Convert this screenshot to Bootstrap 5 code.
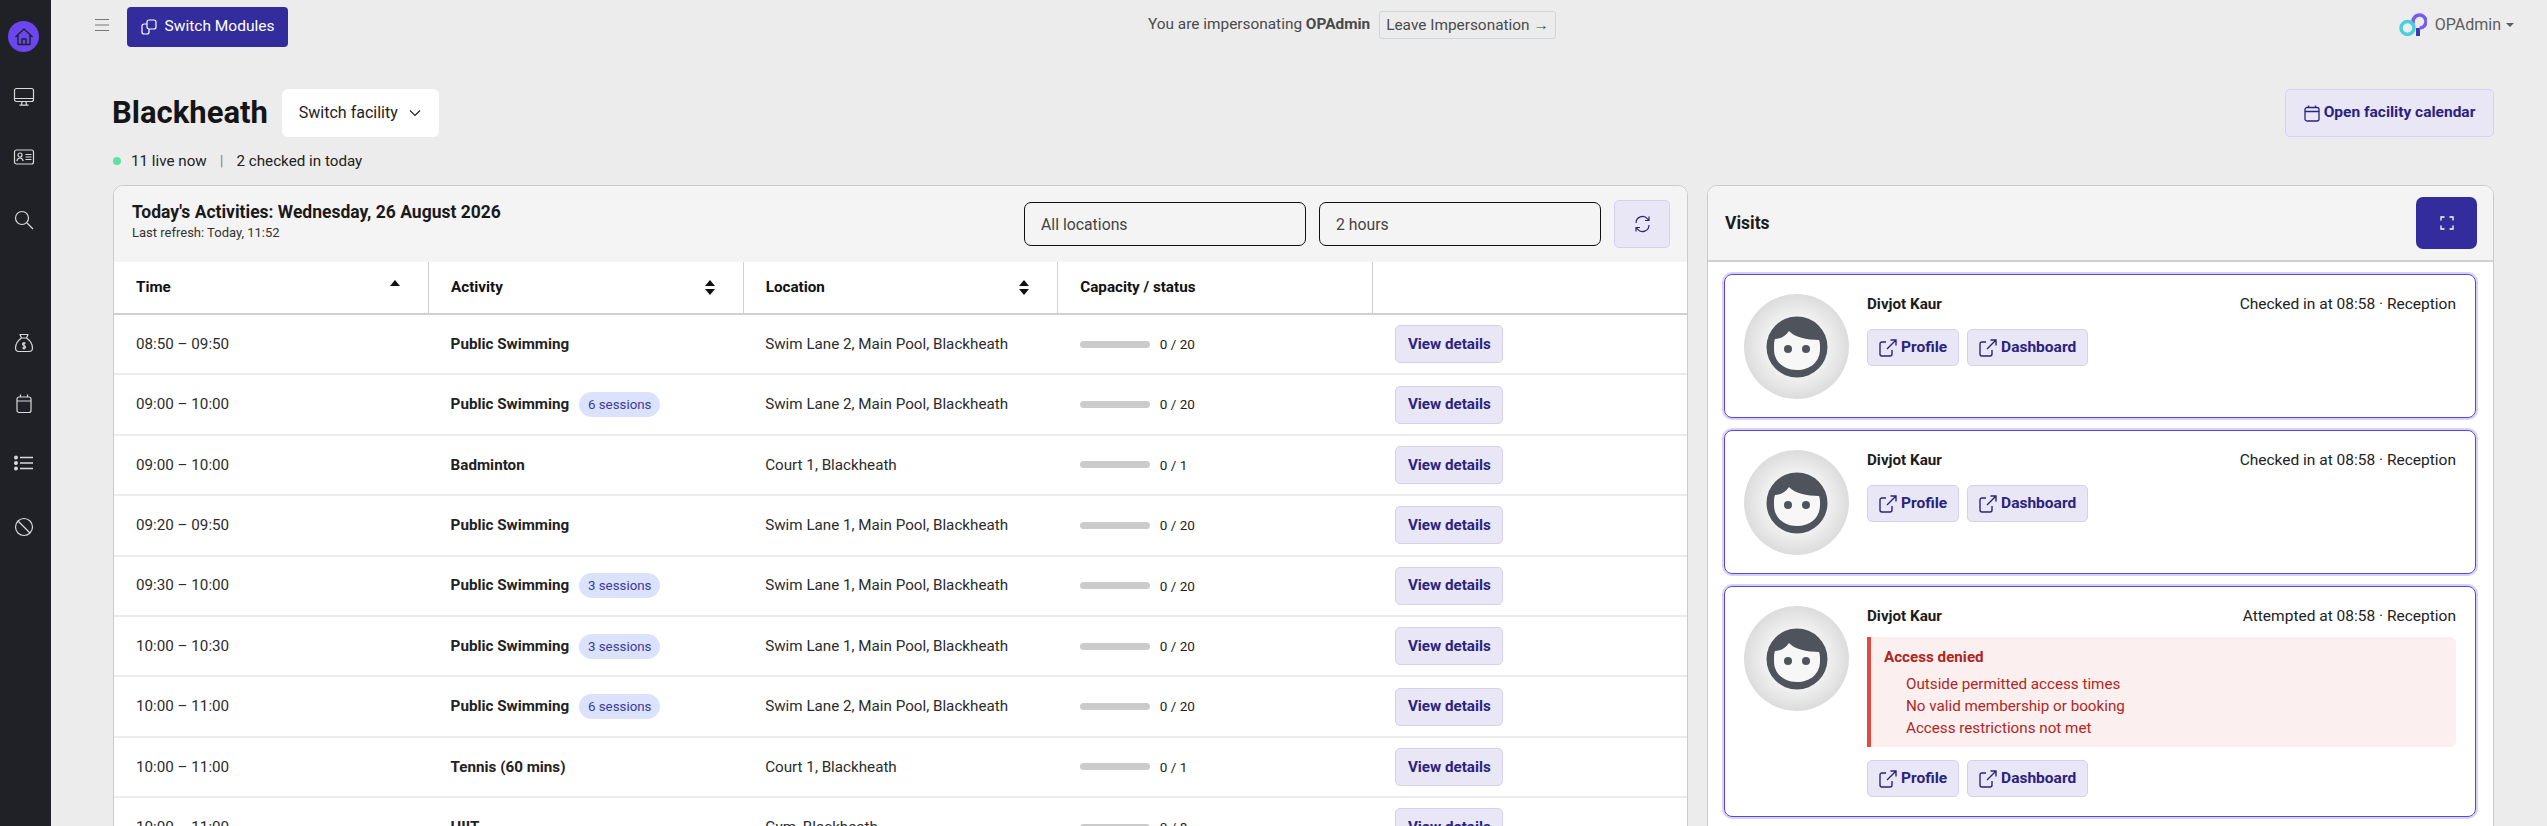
<!DOCTYPE html>
<html lang="en">

<head>
    <meta charset="UTF-8">
    <meta name="viewport" content="width=device-width, initial-scale=1.0">
    <title>Blackheath</title>
    <link href="https://cdn.jsdelivr.net/npm/bootstrap@5.3.3/dist/css/bootstrap.min.css" rel="stylesheet">
    <style>
        html, body { height: 100%; overflow: hidden; }
        body { font-family: Roboto, "Liberation Sans", sans-serif; font-size: 15.2px; background: #ececec; color: #1c1c1c; }

        .side-rail { width: 51px; flex: none; background: #1f2127; height: 826px; color: #d9d9d9; padding: 21px 4px 0 0; }
        .rail-link { width: 47px; height: 61.3px; }
        .rail-first { height: 66px; }
        .rail-home { width: 31px; height: 31px; border-radius: 50%; background: #6b46ee; color: #1f2127; }
        .rail-gap { height: 62px; }

        .top-strip { height: 54px; padding: 7px 0 0 44px; color: #4a4a4a; }
        .burger { color: #777; margin-right: 18px; margin-top: 12px; flex: none; }
        .btn-modules { background: #322c9c; color: #fff; font-size: 15.5px; height: 40px; width: 161px; border: 0; border-radius: 4px; }
        .btn-modules:hover { background: #322c9c; color: #fff; }
        .leave-btn { border: 1px solid #cfd6de; border-radius: 3px; padding: 2px 6px; font-size: 15.4px; color: #4a4a4a; height: 28px; margin-left: 9px; background: transparent; }
        .imperson { position: absolute; left: 1097px; top: 11px; height: 28px; font-size: 15.4px; color: #4a4a4a; }
        .user-menu { position: absolute; right: 33px; top: 13px; color: #5c5c5c; font-size: 16px; gap: 5px; }
        .user-logo { margin-right: 3px; }
        .user-caret { border-left: 4px solid transparent; border-right: 4px solid transparent; border-top: 4px solid #5c5c5c; }

        .page-wrap { padding: 35px 53px 0 62px; }
        .page-title { font-size: 31px; font-weight: 700; margin: 0 0 0 -1px; line-height: 48px; color: #151515; }
        .btn-facility { background: #fff; border: 0; border-radius: 6px; width: 157px; height: 48px; font-size: 16px; color: #222; margin-left: 14px; padding: 0 0 0 17px; gap: 11px; }
        .btn-soft { background: #e9e6f5; border: 1px solid #d6d0ef; color: #2a2380; font-weight: 700; border-radius: 5px; }
        .btn-soft:hover { background: #e9e6f5; border-color: #d6d0ef; color: #2a2380; }
        .btn-calendar { width: 209px; height: 48px; font-size: 15.5px; padding: 0; }
        .status-row { height: 24px; margin-top: 12px; margin-bottom: 12px; color: #222; }
        .live-dot { width: 8px; height: 8px; border-radius: 50%; background: #5fe0ab; margin-right: 10px; }
        .status-sep { margin: 0 13px; color: #888; }

        .panels { display: grid; grid-template-columns: 1575px 787px; gap: 19px; }
        .panel-box { background: #fff; border: 1px solid #cbcbcb; border-radius: 10px 10px 0 0; height: 700px; overflow: hidden; }
        .panel-head { height: 76px; background: #f4f4f4; }
        .activities-head { padding: 0 17px 0 18px; }
        .head-title { font-size: 17.5px; font-weight: 700; color: #1a1a1a; line-height: 22px; margin-top: -4px; }
        .head-sub { font-size: 13px; color: #333; line-height: 20px; }
        .filter-box { width: 282px; height: 44px; border: 1px solid #111; border-radius: 7px; padding: 2px 16px 0; margin-right: 13px; background: #f4f4f4; color: #444; font-size: 15.8px; }
        .btn-refresh { width: 56px; height: 48px; padding: 0; }

        .act-table { table-layout: fixed; width: 100%; margin: 0; font-size: 15.2px; }
        .act-table th { height: 52px; padding: 0 27px 0 22px; font-weight: 700; border-bottom: 2px solid #d0d0d0; border-right: 1px solid #d0d0d0; vertical-align: middle; color: #111; }
        .act-table th:last-child { border-right: 0; }
        .act-table td { height: 60.4px; padding: 0 22px; vertical-align: middle; border-bottom: 2px solid #ececec; color: #2b2b2b; }
        .act-table td:last-child { padding-left: 23px; }
        .act-name { font-weight: 700; color: #222; }
        .sess-pill { display: inline-block; background: #dbe2fb; color: #3a3a9e; font-size: 13.3px; line-height: 25px; padding: 0 9px; border-radius: 13px; margin-left: 6px; }
        .cap-bar { width: 70px; height: 7px; background: #cbcbcb; border-radius: 4px; margin-right: 10px; }
        .cap-text { font-size: 13.5px; color: #222; }
        .btn-view { width: 108px; height: 38px; font-size: 15.2px; padding: 0; }

        .visits-head { padding: 0 16px 0 17px; border-bottom: 2px solid #d0d0d0; }
        .visits-title { font-size: 17.5px; font-weight: 700; }
        .btn-expand { width: 61px; height: 52px; background: #322c9c; border: 0; border-radius: 7px; color: #fff; padding: 0; }
        .btn-expand:hover { background: #322c9c; color: #fff; }
        .visits-list { padding: 12px 17px 0 16px; }
        .visit-card { border: 1px solid #5b45d6; box-shadow: 0 0 0 2px #d9d2f8; border-radius: 8px; padding: 19px 19px 0 19px; margin-bottom: 12px; }
        .visit-short { height: 144px; }
        .visit-tall { height: 231px; }
        .face-wrap { width: 105px; height: 105px; flex: none; border-radius: 50%; background: radial-gradient(circle closest-side, #fff 30%, #dcdcdc 100%); margin-right: 18px; }
        .visit-name { font-weight: 700; font-size: 15.2px; color: #1c1c1c; line-height: 20px; }
        .visit-when { font-size: 15.5px; color: #222; line-height: 20px; }
        .name-row { margin-bottom: 15px; }
        .btn-link-soft { height: 37px; font-size: 15.5px; padding: 0 11px; margin-right: 8px; }
        .denied-box { background: #fbefef; border-left: 4px solid #e04a3f; border-radius: 0 6px 6px 0; height: 110px; margin: 11px 0 13px; padding: 9px 13px; color: #b0261e; font-size: 15.2px; line-height: 22px; }
        .denied-title { font-weight: 700; margin-bottom: 5px; }
        .denied-item { padding-left: 22px; }
    </style>
</head>

<body>
    <div class="d-flex">

        <!-- SIDE RAIL -->
        <nav class="side-rail d-flex flex-column align-items-center">
            <div class="rail-link rail-first d-flex justify-content-center">
                <span class="rail-home d-flex align-items-center justify-content-center">
                    <svg width="20" height="20" viewBox="0 0 20 20" fill="none" stroke="currentColor" stroke-width="1.400" stroke-linejoin="round"><path d="M1.500 10 10 2l8.500 8M4 8v9.500h12V8M8 17.500v-5.500h4v5.500"/></svg>
                </span>
            </div>
            <div class="rail-link d-flex justify-content-center">
                <svg width="22" height="20" viewBox="0 0 22 20" fill="none" stroke="currentColor" stroke-width="1.200"><rect x="1.500" y="1.500" width="19" height="13" rx="2"/><path d="M1.500 11.500h19M9 14.500l-.5 3.500M13 14.500l.5 3.500M6.500 18.200h9"/></svg>
            </div>
            <div class="rail-link d-flex justify-content-center">
                <svg width="22" height="18" viewBox="0 0 22 18" fill="none" stroke="currentColor" stroke-width="1.200"><rect x="1.500" y="2" width="19" height="14" rx="2"/><circle cx="7" cy="7" r="2"/><path d="M3.800 13c.5-2 1.800-3 3.200-3s2.700 1 3.200 3M12.500 6.500h6M12.500 9h6M12.500 11.500h6"/></svg>
            </div>
            <div class="rail-link d-flex justify-content-center">
                <svg width="20" height="20" viewBox="0 0 20 20" fill="none" stroke="currentColor" stroke-width="1.200"><circle cx="8" cy="8" r="6.500"/><path d="m13 13 6 6"/></svg>
            </div>
            <div class="rail-gap"></div>
            <div class="rail-link d-flex justify-content-center">
                <svg width="20" height="20" viewBox="0 0 20 20" fill="none" stroke="currentColor" stroke-width="1.200" stroke-linejoin="round"><path d="M6 1.500h8L12.500 5h-5zM7.500 5C4 7.500 1.500 11 1.500 15c0 2 1.200 3.500 3.500 3.500h10c2.300 0 3.500-1.500 3.500-3.500 0-4-2.500-7.500-6-10M11.500 10.500C11 9.700 8.500 9.500 8.500 11.200s3 1 3 2.800-2.500 1.500-3 .6M10 9v7.500"/></svg>
            </div>
            <div class="rail-link d-flex justify-content-center">
                <svg width="18" height="20" viewBox="0 0 18 20" fill="none" stroke="currentColor" stroke-width="1.200"><rect x="2" y="3" width="14" height="15.500" rx="2"/><path d="M2 7h14M5.500 .5V3M12.500 .5V3"/></svg>
            </div>
            <div class="rail-link d-flex justify-content-center">
                <svg width="20" height="16" viewBox="0 0 20 16" fill="none" stroke="currentColor" stroke-width="1.300"><path d="M6 2.500h13M6 8h13M6 13.500h13"/><circle cx="2" cy="2.500" r="1.300" fill="currentColor"/><circle cx="2" cy="8" r="1.300" fill="currentColor"/><circle cx="2" cy="13.500" r="1.300" fill="currentColor"/></svg>
            </div>
            <div class="rail-link d-flex justify-content-center">
                <svg width="20" height="20" viewBox="0 0 20 20" fill="none" stroke="currentColor" stroke-width="1.200"><circle cx="10" cy="10" r="8.500"/><path d="m4 4 12 12"/></svg>
            </div>
        </nav>

        <main class="flex-grow-1 position-relative">
            <!-- TOP BAR -->
            <div class="top-strip d-flex align-items-start">
                <svg class="burger" width="14" height="12" viewBox="0 0 14 12" fill="none" stroke="currentColor" stroke-width="1"><path d="M0 .5h14M0 6h14M0 11.500h14"/></svg>
                <button class="btn btn-modules d-flex align-items-center justify-content-center gap-2 p-0">
                    <svg width="16" height="16" viewBox="0 0 16 16" fill="none" stroke="currentColor" stroke-width="1.200"><rect x="6" y="1" width="9" height="9" rx="2"/><path d="M6 5H3a2 2 0 0 0-2 2v6a2 2 0 0 0 2 2h3a2 2 0 0 0 2-2v-3"/></svg>
                    Switch Modules
                </button>
            </div>
            <div class="imperson d-flex align-items-center">
                <span>You are impersonating <strong>OPAdmin</strong></span>
                <button class="leave-btn">Leave Impersonation &rarr;</button>
            </div>
            <div class="user-menu d-flex align-items-center">
                <svg class="user-logo" width="28" height="24" viewBox="0 0 28 24" fill="none"><path d="M19 23v-8" stroke="#3f35b5" stroke-width="4"/><path d="M14.500 11a6.500 6.500 0 1 1 6 4" stroke="#7a5bf0" stroke-width="3.500"/><circle cx="8.500" cy="15" r="6.500" stroke="#47d0dc" stroke-width="3.500"/></svg>
                <span>OPAdmin</span>
                <span class="user-caret"></span>
            </div>

            <div class="page-wrap">
                <!-- TITLE -->
                <div class="d-flex align-items-center justify-content-between">
                    <div class="d-flex align-items-center">
                        <h1 class="page-title">Blackheath</h1>
                        <button class="btn btn-facility d-flex align-items-center">
                            Switch facility
                            <svg width="12" height="8" viewBox="0 0 12 8" fill="none" stroke="currentColor" stroke-width="1.200"><path d="m1 1.500 5 5 5-5"/></svg>
                        </button>
                    </div>
                    <button class="btn btn-soft btn-calendar d-flex align-items-center justify-content-center gap-1">
                        <svg width="16" height="17" viewBox="0 0 16 17" fill="none" stroke="currentColor" stroke-width="1.300"><rect x="1" y="2.500" width="14" height="13.500" rx="2"/><path d="M1 6.500h14M4.500 .5v2M11.500 .5v2"/></svg>
                        Open facility calendar
                    </button>
                </div>

                <div class="status-row d-flex align-items-center">
                    <span class="live-dot"></span>
                    <span>11 live now</span>
                    <span class="status-sep">|</span>
                    <span>2 checked in today</span>
                </div>

                <div class="panels">
                    <!-- ACTIVITIES -->
                    <section class="panel-box">
                        <div class="panel-head activities-head d-flex align-items-center">
                            <div class="flex-grow-1">
                                <div class="head-title">Today's Activities: Wednesday, 26 August 2026</div>
                                <div class="head-sub">Last refresh: Today, 11:52</div>
                            </div>
                            <div class="filter-box d-flex align-items-center">All locations</div>
                            <div class="filter-box d-flex align-items-center">2 hours</div>
                            <button class="btn btn-soft btn-refresh d-flex align-items-center justify-content-center">
                                <svg width="17" height="18" viewBox="0 0 17 18" fill="none" stroke="currentColor" stroke-width="1.200"><path d="M2 8a6.500 6.500 0 0 1 11.500-4.200L15 5.500M15 1.500v4h-4M15 10a6.500 6.500 0 0 1-11.500 4.200L2 12.500M2 16.500v-4h4"/></svg>
                            </button>
                        </div>
                        <table class="table act-table">
                            <thead>
                                <tr>
                                    <th><div class="d-flex justify-content-between align-items-center">Time
                                        <svg class="mb-2" width="12" height="7" viewBox="0 0 12 7"><path d="M6 0l5 6H1z" fill="#111"/></svg></div></th>
                                    <th><div class="d-flex justify-content-between align-items-center">Activity
                                        <svg width="12" height="15" viewBox="0 0 12 15"><path d="M6 0l5 6H1zM6 15l5-6H1z" fill="#111"/></svg></div></th>
                                    <th><div class="d-flex justify-content-between align-items-center">Location
                                        <svg width="12" height="15" viewBox="0 0 12 15"><path d="M6 0l5 6H1zM6 15l5-6H1z" fill="#111"/></svg></div></th>
                                    <th>Capacity / status</th>
                                    <th></th>
                                </tr>
                            </thead>
                            <tbody>
                                <tr>
                                    <td>08:50 – 09:50</td>
                                    <td><span class="act-name">Public Swimming</span></td>
                                    <td>Swim Lane 2, Main Pool, Blackheath</td>
                                    <td><div class="d-flex align-items-center"><span class="cap-bar"></span><span class="cap-text">0 / 20</span></div></td>
                                    <td><button class="btn btn-soft btn-view">View details</button></td>
                                </tr>
                                <tr>
                                    <td>09:00 – 10:00</td>
                                    <td><span class="act-name">Public Swimming</span> <span class="sess-pill">6 sessions</span></td>
                                    <td>Swim Lane 2, Main Pool, Blackheath</td>
                                    <td><div class="d-flex align-items-center"><span class="cap-bar"></span><span class="cap-text">0 / 20</span></div></td>
                                    <td><button class="btn btn-soft btn-view">View details</button></td>
                                </tr>
                                <tr>
                                    <td>09:00 – 10:00</td>
                                    <td><span class="act-name">Badminton</span></td>
                                    <td>Court 1, Blackheath</td>
                                    <td><div class="d-flex align-items-center"><span class="cap-bar"></span><span class="cap-text">0 / 1</span></div></td>
                                    <td><button class="btn btn-soft btn-view">View details</button></td>
                                </tr>
                                <tr>
                                    <td>09:20 – 09:50</td>
                                    <td><span class="act-name">Public Swimming</span></td>
                                    <td>Swim Lane 1, Main Pool, Blackheath</td>
                                    <td><div class="d-flex align-items-center"><span class="cap-bar"></span><span class="cap-text">0 / 20</span></div></td>
                                    <td><button class="btn btn-soft btn-view">View details</button></td>
                                </tr>
                                <tr>
                                    <td>09:30 – 10:00</td>
                                    <td><span class="act-name">Public Swimming</span> <span class="sess-pill">3 sessions</span></td>
                                    <td>Swim Lane 1, Main Pool, Blackheath</td>
                                    <td><div class="d-flex align-items-center"><span class="cap-bar"></span><span class="cap-text">0 / 20</span></div></td>
                                    <td><button class="btn btn-soft btn-view">View details</button></td>
                                </tr>
                                <tr>
                                    <td>10:00 – 10:30</td>
                                    <td><span class="act-name">Public Swimming</span> <span class="sess-pill">3 sessions</span></td>
                                    <td>Swim Lane 1, Main Pool, Blackheath</td>
                                    <td><div class="d-flex align-items-center"><span class="cap-bar"></span><span class="cap-text">0 / 20</span></div></td>
                                    <td><button class="btn btn-soft btn-view">View details</button></td>
                                </tr>
                                <tr>
                                    <td>10:00 – 11:00</td>
                                    <td><span class="act-name">Public Swimming</span> <span class="sess-pill">6 sessions</span></td>
                                    <td>Swim Lane 2, Main Pool, Blackheath</td>
                                    <td><div class="d-flex align-items-center"><span class="cap-bar"></span><span class="cap-text">0 / 20</span></div></td>
                                    <td><button class="btn btn-soft btn-view">View details</button></td>
                                </tr>
                                <tr>
                                    <td>10:00 – 11:00</td>
                                    <td><span class="act-name">Tennis (60 mins)</span></td>
                                    <td>Court 1, Blackheath</td>
                                    <td><div class="d-flex align-items-center"><span class="cap-bar"></span><span class="cap-text">0 / 1</span></div></td>
                                    <td><button class="btn btn-soft btn-view">View details</button></td>
                                </tr>
                                <tr>
                                    <td>10:00 – 11:00</td>
                                    <td><span class="act-name">HIIT</span></td>
                                    <td>Gym, Blackheath</td>
                                    <td><div class="d-flex align-items-center"><span class="cap-bar"></span><span class="cap-text">0 / 8</span></div></td>
                                    <td><button class="btn btn-soft btn-view">View details</button></td>
                                </tr>
                            </tbody>
                        </table>
                    </section>

                    <!-- VISITS -->
                    <section class="panel-box">
                        <div class="panel-head visits-head d-flex align-items-center justify-content-between">
                            <span class="visits-title">Visits</span>
                            <button class="btn btn-expand d-flex align-items-center justify-content-center">
                                <svg width="14" height="14" viewBox="0 0 14 14" fill="none" stroke="currentColor" stroke-width="1.300"><path d="M1 4.500V1h3.500M9.500 1H13v3.500M13 9.500V13H9.500M4.500 13H1V9.500"/></svg>
                            </button>
                        </div>
                        <div class="visits-list">
                            <div class="visit-card visit-short d-flex">
                                <div class="face-wrap d-flex align-items-center justify-content-center">
                                    <svg width="62" height="62" viewBox="0 0 62 62"><circle cx="31" cy="31" r="30.500" fill="#4f545c"/><path d="M8 33c0-5 0-8 1-10 5 0 11-3 14-8 5 6 18 9 30 9 1 2 1 5 1 9 0 13-10 21-23 21S8 46 8 33z" fill="#f7f7f7"/><circle cx="22" cy="33" r="4" fill="#4f545c"/><circle cx="40" cy="33" r="4" fill="#4f545c"/></svg>
                                </div>
                                <div class="flex-grow-1">
                                    <div class="name-row d-flex justify-content-between">
                                        <span class="visit-name">Divjot Kaur</span>
                                        <span class="visit-when">Checked in at 08:58 · Reception</span>
                                    </div>
                                    <div class="d-flex">
                                        <button class="btn btn-soft btn-link-soft d-flex align-items-center gap-1">
                                            <svg width="18" height="18" viewBox="0 0 18 18" fill="none" stroke="currentColor" stroke-width="1.400"><path d="M7 3H3a2 2 0 0 0-2 2v10a2 2 0 0 0 2 2h8a2 2 0 0 0 2-2v-4M8 10l9-9M11.500 1H17v5.500"/></svg>
                                            Profile
                                        </button>
                                        <button class="btn btn-soft btn-link-soft d-flex align-items-center gap-1">
                                            <svg width="18" height="18" viewBox="0 0 18 18" fill="none" stroke="currentColor" stroke-width="1.400"><path d="M7 3H3a2 2 0 0 0-2 2v10a2 2 0 0 0 2 2h8a2 2 0 0 0 2-2v-4M8 10l9-9M11.500 1H17v5.500"/></svg>
                                            Dashboard
                                        </button>
                                    </div>
                                </div>
                            </div>
                            <div class="visit-card visit-short d-flex">
                                <div class="face-wrap d-flex align-items-center justify-content-center">
                                    <svg width="62" height="62" viewBox="0 0 62 62"><circle cx="31" cy="31" r="30.500" fill="#4f545c"/><path d="M8 33c0-5 0-8 1-10 5 0 11-3 14-8 5 6 18 9 30 9 1 2 1 5 1 9 0 13-10 21-23 21S8 46 8 33z" fill="#f7f7f7"/><circle cx="22" cy="33" r="4" fill="#4f545c"/><circle cx="40" cy="33" r="4" fill="#4f545c"/></svg>
                                </div>
                                <div class="flex-grow-1">
                                    <div class="name-row d-flex justify-content-between">
                                        <span class="visit-name">Divjot Kaur</span>
                                        <span class="visit-when">Checked in at 08:58 · Reception</span>
                                    </div>
                                    <div class="d-flex">
                                        <button class="btn btn-soft btn-link-soft d-flex align-items-center gap-1">
                                            <svg width="18" height="18" viewBox="0 0 18 18" fill="none" stroke="currentColor" stroke-width="1.400"><path d="M7 3H3a2 2 0 0 0-2 2v10a2 2 0 0 0 2 2h8a2 2 0 0 0 2-2v-4M8 10l9-9M11.500 1H17v5.500"/></svg>
                                            Profile
                                        </button>
                                        <button class="btn btn-soft btn-link-soft d-flex align-items-center gap-1">
                                            <svg width="18" height="18" viewBox="0 0 18 18" fill="none" stroke="currentColor" stroke-width="1.400"><path d="M7 3H3a2 2 0 0 0-2 2v10a2 2 0 0 0 2 2h8a2 2 0 0 0 2-2v-4M8 10l9-9M11.500 1H17v5.500"/></svg>
                                            Dashboard
                                        </button>
                                    </div>
                                </div>
                            </div>
                            <div class="visit-card visit-tall d-flex">
                                <div class="face-wrap d-flex align-items-center justify-content-center">
                                    <svg width="62" height="62" viewBox="0 0 62 62"><circle cx="31" cy="31" r="30.500" fill="#4f545c"/><path d="M8 33c0-5 0-8 1-10 5 0 11-3 14-8 5 6 18 9 30 9 1 2 1 5 1 9 0 13-10 21-23 21S8 46 8 33z" fill="#f7f7f7"/><circle cx="22" cy="33" r="4" fill="#4f545c"/><circle cx="40" cy="33" r="4" fill="#4f545c"/></svg>
                                </div>
                                <div class="flex-grow-1">
                                    <div class="d-flex justify-content-between">
                                        <span class="visit-name">Divjot Kaur</span>
                                        <span class="visit-when">Attempted at 08:58 · Reception</span>
                                    </div>
                                    <div class="denied-box">
                                        <div class="denied-title">Access denied</div>
                                        <div class="denied-item">Outside permitted access times</div>
                                        <div class="denied-item">No valid membership or booking</div>
                                        <div class="denied-item">Access restrictions not met</div>
                                    </div>
                                    <div class="d-flex">
                                        <button class="btn btn-soft btn-link-soft d-flex align-items-center gap-1">
                                            <svg width="18" height="18" viewBox="0 0 18 18" fill="none" stroke="currentColor" stroke-width="1.400"><path d="M7 3H3a2 2 0 0 0-2 2v10a2 2 0 0 0 2 2h8a2 2 0 0 0 2-2v-4M8 10l9-9M11.500 1H17v5.500"/></svg>
                                            Profile
                                        </button>
                                        <button class="btn btn-soft btn-link-soft d-flex align-items-center gap-1">
                                            <svg width="18" height="18" viewBox="0 0 18 18" fill="none" stroke="currentColor" stroke-width="1.400"><path d="M7 3H3a2 2 0 0 0-2 2v10a2 2 0 0 0 2 2h8a2 2 0 0 0 2-2v-4M8 10l9-9M11.500 1H17v5.500"/></svg>
                                            Dashboard
                                        </button>
                                    </div>
                                </div>
                            </div>
                        </div>
                    </section>
                </div>
            </div>
        </main>
    </div>

    <script src="https://cdn.jsdelivr.net/npm/bootstrap@5.3.3/dist/js/bootstrap.bundle.min.js"></script>
</body>

</html>
